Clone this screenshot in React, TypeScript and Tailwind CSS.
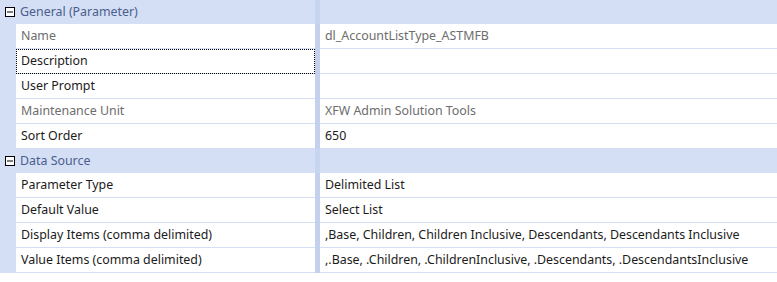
import React from 'react';

type Prop = { name: string; value: string; readOnly?: boolean; focused?: boolean };
type Section = { title: string; props: Prop[] };

const sections: Section[] = [
  {
    title: 'General (Parameter)',
    props: [
      { name: 'Name', value: 'dl_AccountListType_ASTMFB', readOnly: true },
      { name: 'Description', value: '', focused: true },
      { name: 'User Prompt', value: '' },
      { name: 'Maintenance Unit', value: 'XFW Admin Solution Tools', readOnly: true },
      { name: 'Sort Order', value: '650' },
    ],
  },
  {
    title: 'Data Source',
    props: [
      { name: 'Parameter Type', value: 'Delimited List' },
      { name: 'Default Value', value: 'Select List' },
      { name: 'Display Items (comma delimited)', value: ',Base, Children, Children Inclusive, Descendants, Descendants Inclusive' },
      { name: 'Value Items (comma delimited)', value: ',.Base, .Children, .ChildrenInclusive, .Descendants, .DescendantsInclusive' },
    ],
  },
];

const MinusBox = () => (
  <svg width="10" height="10" viewBox="0 0 10 10" className="block">
    <rect x="0.5" y="0.5" width="9" height="9" fill="#fff" stroke="#000" />
    <rect x="2" y="4.5" width="6" height="1" fill="#000" />
  </svg>
);

const PropertyRow = ({ prop }: { prop: Prop }) => {
  const text = prop.readOnly ? 'text-[#6d6d6d]' : 'text-[#1b1b1b]';
  return (
    <div className="flex h-[25px]">
      <div className="w-4 shrink-0 bg-[#d4dff5]" />
      <div
        className={`flex w-[299px] shrink-0 items-center border-b border-[#d4dff5] bg-white pl-[5px] pt-px ${text} ${
          prop.focused ? 'outline-1 -outline-offset-1 outline-dotted outline-black' : ''
        }`}
      >
        {prop.name}
      </div>
      <div className="w-[5px] shrink-0 bg-[#c3d1ee]" />
      <div className={`flex flex-1 items-center border-b border-[#d4dff5] bg-white pl-[5px] pt-px whitespace-nowrap ${text}`}>
        {prop.value}
      </div>
    </div>
  );
};

export default function App() {
  return (
    <div className="h-[282px] w-[777px] overflow-hidden bg-white font-['Noto_Sans',sans-serif] text-[12.4px]">
      {sections.map((s) => (
        <div key={s.title}>
          <div className="flex h-[24px] bg-[#d4dff5]">
            <div className="flex w-[299px] shrink-0 items-center pl-[5px] text-[#4b5e8c]">
              <MinusBox />
              <span className="ml-[5px]">{s.title}</span>
            </div>
            <div className="w-[16px] shrink-0" />
            <div className="w-[5px] shrink-0 bg-[#c8d5ef]" />
            <div className="flex-1" />
          </div>
          {s.props.map((p) => (
            <PropertyRow key={p.name} prop={p} />
          ))}
        </div>
      ))}
    </div>
  );
}
